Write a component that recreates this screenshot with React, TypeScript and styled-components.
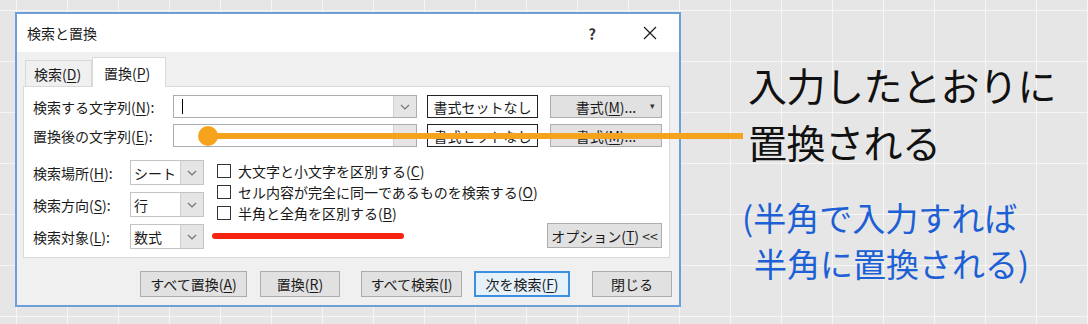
import styled, { createGlobalStyle } from "styled-components";

const GlobalStyle = createGlobalStyle`
  html, body { margin: 0; padding: 0; }
  body {
    width: 1088px;
    height: 324px;
    overflow: hidden;
    background: #e6e6e6;
    font-family: "Noto Sans CJK JP", "Noto Sans", sans-serif;
  }
`;

const Chevron = () => (
  <svg width="10" height="6" viewBox="0 0 10 6">
    <path d="M1 1 L5 5 L9 1" fill="none" stroke="#707070" strokeWidth="1.1" />
  </svg>
);

const CloseIcon = () => (
  <svg width="14" height="14" viewBox="0 0 14 14">
    <path d="M1 1 L13 13 M13 1 L1 13" stroke="#1a1a1a" strokeWidth="1.2" />
  </svg>
);

export default function App() {
  return (
    <>
      <GlobalStyle />
      <Page>
        <Dialog>
          <TitleBar>
            <Title>検索と置換</Title>
            <HelpButton>?</HelpButton>
            <CloseButton>
              <CloseIcon />
            </CloseButton>
          </TitleBar>

          <TabStrip>
            <Tab>
              検索(<u>D</u>)
            </Tab>
            <Tab $active>
              置換(<u>P</u>)
            </Tab>
          </TabStrip>

          <Panel>
            <TextRow>
              <FieldLabel>
                検索する文字列(<u>N</u>):
              </FieldLabel>
              <Combo>
                <Caret />
                <ArrowBox>
                  <Chevron />
                </ArrowBox>
              </Combo>
              <FormatClear>書式セットなし</FormatClear>
              <FormatButton>
                書式(<u>M</u>)...
                <SplitMark>▾</SplitMark>
              </FormatButton>
            </TextRow>
            <TextRow>
              <FieldLabel>
                置換後の文字列(<u>E</u>):
              </FieldLabel>
              <Combo>
                <ArrowBox>
                  <Chevron />
                </ArrowBox>
              </Combo>
              <FormatClear>書式セットなし</FormatClear>
              <FormatButton>
                書式(<u>M</u>)...
              </FormatButton>
            </TextRow>

            <LowerArea>
              <SelectGrid>
                <SelectLabel>
                  検索場所(<u>H</u>):
                </SelectLabel>
                <Select>
                  <SelectValue>シート</SelectValue>
                  <ArrowBox>
                    <Chevron />
                  </ArrowBox>
                </Select>
                <SelectLabel>
                  検索方向(<u>S</u>):
                </SelectLabel>
                <Select>
                  <SelectValue>行</SelectValue>
                  <ArrowBox>
                    <Chevron />
                  </ArrowBox>
                </Select>
                <SelectLabel>
                  検索対象(<u>L</u>):
                </SelectLabel>
                <Select>
                  <SelectValue>数式</SelectValue>
                  <ArrowBox>
                    <Chevron />
                  </ArrowBox>
                </Select>
              </SelectGrid>

              <CheckList>
                <CheckItem>
                  <CheckBox />
                  大文字と小文字を区別する(<u>C</u>)
                </CheckItem>
                <CheckItem>
                  <CheckBox />
                  セル内容が完全に同一であるものを検索する(<u>O</u>)
                </CheckItem>
                <CheckItem>
                  <CheckBox />
                  半角と全角を区別する(<u>B</u>)
                </CheckItem>
                <RedMark />
              </CheckList>

              <OptionsButton>
                オプション(<u>T</u>) &lt;&lt;
              </OptionsButton>
            </LowerArea>
          </Panel>

          <ButtonRow>
            <DialogButton $w={107}>
              すべて置換(<u>A</u>)
            </DialogButton>
            <DialogButton $w={80} $gap={13}>
              置換(<u>R</u>)
            </DialogButton>
            <DialogButton $w={101} $gap={21}>
              すべて検索(<u>I</u>)
            </DialogButton>
            <DialogButton $w={96} $gap={12} $primary>
              次を検索(<u>F</u>)
            </DialogButton>
            <DialogButton $w={80} $gap={22}>
              閉じる
            </DialogButton>
          </ButtonRow>
        </Dialog>

        <Callout>
          <MainLine>入力したとおりに</MainLine>
          <MainLine>置換される</MainLine>
          <NoteBlock>
            <NoteLine>(半角で入力すれば</NoteLine>
            <NoteLine $indent={12}>半角に置換される)</NoteLine>
          </NoteBlock>
        </Callout>

        <Connector>
          <Dot />
          <Beam />
        </Connector>
      </Page>
    </>
  );
}

const Page = styled.div`
  position: relative;
  width: 1088px;
  height: 324px;
  display: flex;
  align-items: flex-start;
  background-color: #e6e6e6;
  background-image: linear-gradient(to right, #f6f6f6 1px, transparent 1px),
    linear-gradient(to bottom, #f6f6f6 1px, transparent 1px);
  background-size: 51px 51px;
  background-position: 16px 10px;
`;

const Dialog = styled.div`
  margin: 12px 0 0 15px;
  width: 666px;
  height: 295px;
  box-sizing: border-box;
  border: 2px solid #6f9fd8;
  background: #f0f0f0;
  display: flex;
  flex-direction: column;
  font-size: 14px;
  color: #000;

  u {
    text-underline-offset: 2px;
  }
`;

const TitleBar = styled.div`
  height: 38px;
  background: #fff;
  display: flex;
  align-items: center;
  padding-left: 10px;
`;

const Title = styled.div`
  font-size: 14px;
  color: #1a1a1a;
`;

const HelpButton = styled.div`
  margin-left: auto;
  width: 46px;
  text-align: center;
  font-size: 15px;
  font-weight: 700;
  color: #333;
`;

const CloseButton = styled.div`
  width: 46px;
  margin: 0 6px 0 12px;
  display: flex;
  justify-content: center;
`;

const TabStrip = styled.div`
  height: 28px;
  margin: 6px 9px 0 8px;
  display: flex;
  align-items: flex-end;
`;

const Tab = styled.div<{ $active?: boolean }>`
  box-sizing: border-box;
  height: ${({ $active }) => ($active ? "30px" : "26px")};
  width: ${({ $active }) => ($active ? "74px" : "67px")};
  margin-bottom: ${({ $active }) => ($active ? "-1px" : "0")};
  padding-left: ${({ $active }) => ($active ? "11px" : "8px")};
  border: 1px solid #d9d9d9;
  border-bottom: none;
  background: ${({ $active }) => ($active ? "#fff" : "#f0f0f0")};
  position: relative;
  z-index: ${({ $active }) => ($active ? 1 : 0)};
  display: flex;
  align-items: center;
  font-size: 14px;
  color: #1a1a1a;
`;

const Panel = styled.div`
  box-sizing: border-box;
  height: 172px;
  margin: 0 9px 0 6px;
  padding: 8px 7px 0 9px;
  background: #fff;
  border: 1px solid #d9d9d9;
  display: flex;
  flex-direction: column;
  gap: 6px;
`;

const TextRow = styled.div`
  height: 23px;
  display: flex;
  align-items: center;
`;

const FieldLabel = styled.div`
  width: 140px;
  white-space: nowrap;
  color: #1a1a1a;
`;

const Combo = styled.div`
  box-sizing: border-box;
  width: 244px;
  height: 23px;
  border: 1px solid #abadb3;
  background: #fff;
  display: flex;
  align-items: center;
`;

const Caret = styled.div`
  width: 1px;
  height: 15px;
  margin-left: 8px;
  background: #000;
`;

const ArrowBox = styled.div`
  margin-left: auto;
  width: 22px;
  align-self: stretch;
  background: #e5e5e5;
  border-left: 1px solid #d0d0d0;
  display: flex;
  align-items: center;
  justify-content: center;
`;

const FormatClear = styled.div`
  box-sizing: border-box;
  margin-left: 10px;
  width: 111px;
  height: 23px;
  border: 1px solid #222;
  background: #fdfdfd;
  display: flex;
  align-items: center;
  justify-content: center;
  color: #1a1a1a;
`;

const FormatButton = styled.div`
  position: relative;
  box-sizing: border-box;
  margin-left: 12px;
  width: 112px;
  height: 23px;
  border: 1px solid #adadad;
  background: #e1e1e1;
  display: flex;
  align-items: center;
  justify-content: center;
  color: #1a1a1a;
`;

const SplitMark = styled.span`
  position: absolute;
  right: 6px;
  top: 3px;
  font-size: 9px;
  color: #333;
`;

const LowerArea = styled.div`
  margin-top: 7px;
  display: flex;
  align-items: flex-start;
  height: 89px;
`;

const SelectGrid = styled.div`
  display: grid;
  grid-template-columns: 97px 74px;
  grid-auto-rows: 25px;
  row-gap: 7px;
  align-items: center;
`;

const SelectLabel = styled.div`
  white-space: nowrap;
  color: #1a1a1a;
`;

const Select = styled.div`
  box-sizing: border-box;
  height: 25px;
  border: 1px solid #c4c4c4;
  background: #fff;
  display: flex;
  align-items: center;
`;

const SelectValue = styled.span`
  padding-left: 3px;
  color: #1a1a1a;
`;

const CheckList = styled.div`
  margin-left: 13px;
  display: flex;
  flex-direction: column;
`;

const CheckItem = styled.div`
  height: 21px;
  display: flex;
  align-items: center;
  white-space: nowrap;
  color: #1a1a1a;
`;

const CheckBox = styled.span`
  box-sizing: border-box;
  width: 14px;
  height: 14px;
  margin-right: 7px;
  border: 1px solid #333;
  background: #fff;
`;

const RedMark = styled.div`
  margin: 10px 0 0 -5px;
  width: 192px;
  height: 6px;
  border-radius: 3px;
  background: #f52410;
`;

const OptionsButton = styled.div`
  box-sizing: border-box;
  margin-left: auto;
  align-self: flex-end;
  margin-bottom: 1px;
  width: 115px;
  height: 25px;
  border: 1px solid #adadad;
  background: #e1e1e1;
  display: flex;
  align-items: center;
  justify-content: center;
  white-space: nowrap;
  color: #1a1a1a;
`;

const ButtonRow = styled.div`
  margin: 13px 7px 0 0;
  display: flex;
  justify-content: flex-end;
`;

const DialogButton = styled.div<{ $w: number; $gap?: number; $primary?: boolean }>`
  box-sizing: border-box;
  width: ${({ $w }) => $w}px;
  height: 26px;
  margin-left: ${({ $gap }) => $gap ?? 0}px;
  border: ${({ $primary }) => ($primary ? "2px solid #3c8fe0" : "1px solid #adadad")};
  background: ${({ $primary }) => ($primary ? "#e5f1fb" : "#e1e1e1")};
  display: flex;
  align-items: center;
  justify-content: center;
  white-space: nowrap;
  color: #1a1a1a;
`;

const Callout = styled.div`
  margin-left: 67px;
  padding-top: 56px;
  display: flex;
  flex-direction: column;
`;

const MainLine = styled.div`
  font-size: 39px;
  line-height: 57px;
  letter-spacing: -0.5px;
  color: #111;
  white-space: nowrap;
`;

const NoteBlock = styled.div`
  margin: 24px 0 0 -6px;
  display: flex;
  flex-direction: column;
`;

const NoteLine = styled.div<{ $indent?: number }>`
  padding-left: ${({ $indent }) => $indent ?? 0}px;
  font-size: 33px;
  line-height: 46px;
  color: #1d5fd4;
  white-space: nowrap;
`;

const Connector = styled.div`
  position: absolute;
  left: 198px;
  top: 126px;
  display: flex;
  align-items: center;
`;

const Dot = styled.div`
  width: 20px;
  height: 20px;
  border-radius: 50%;
  background: #f5a31c;
`;

const Beam = styled.div`
  margin-left: -10px;
  width: 535px;
  height: 6px;
  background: #f5a31c;
`;
